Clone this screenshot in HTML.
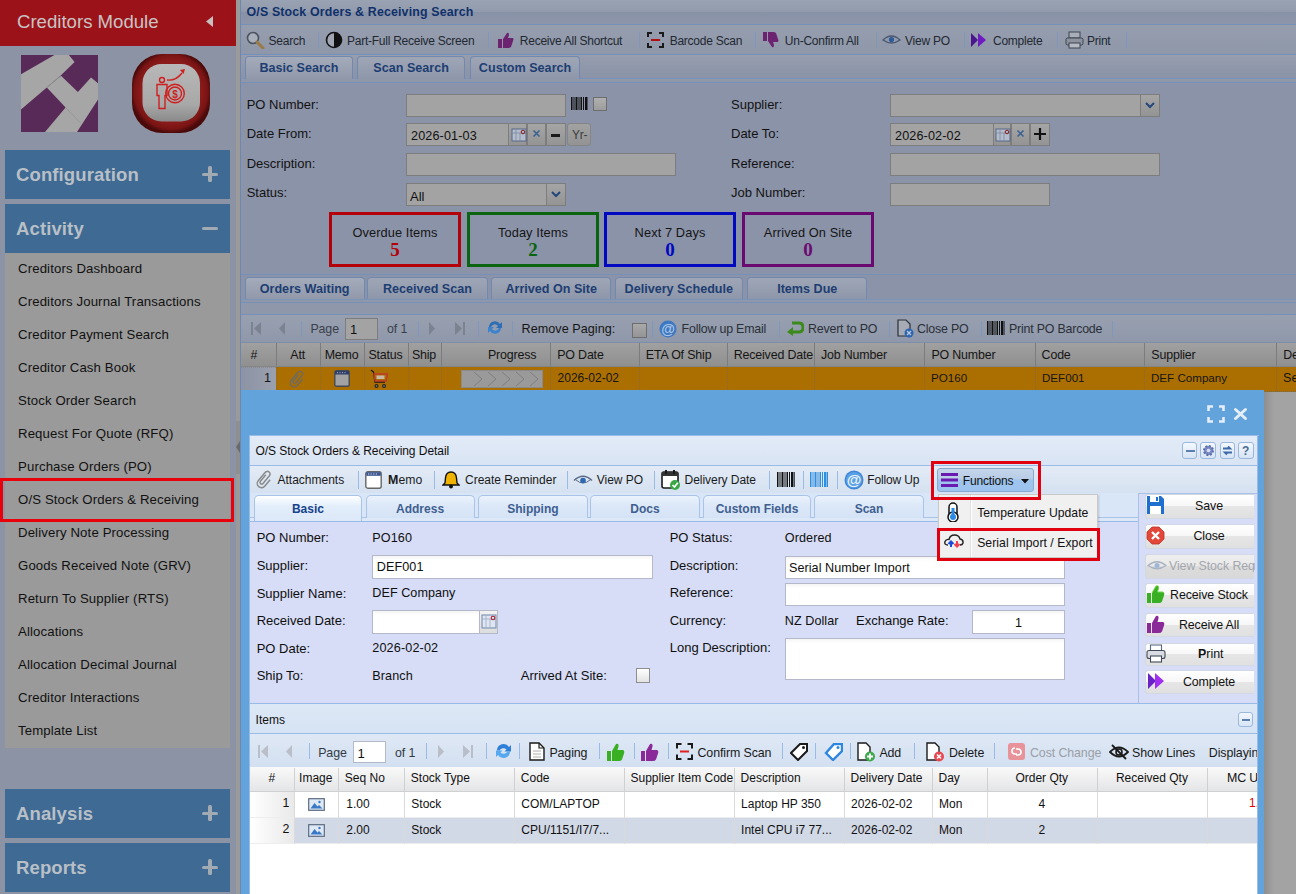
<!DOCTYPE html><html><head><meta charset="utf-8"><style>
html,body{margin:0;padding:0;width:1296px;height:894px;overflow:hidden;background:#8b93a8;font-family:"Liberation Sans",sans-serif;}
.r{position:absolute;box-sizing:border-box;}
.t{position:absolute;line-height:1;white-space:nowrap;}
</style></head><body>
<div class="r" style="left:0px;top:0px;width:236px;height:894px;background:#8b93a5"></div>
<div class="r" style="left:236px;top:0px;width:4px;height:894px;background:#9a9a9a"></div>
<div class="r" style="left:236px;top:421px;width:4px;height:53px;background:#8f8f8f"></div>
<svg class="r" style="left:236px;top:441px;" width="4" height="12" viewBox="0 0 4 12"><path d="M4 0 L0 6 L4 12Z" fill="#6a6a6a"/></svg>
<div class="r" style="left:0px;top:0px;width:236px;height:46px;background:#9c1219"></div>
<div class="t" style="left:17px;top:13.26px;font-size:18.6px;color:#c9c3c3;">Creditors Module</div>
<svg class="r" style="left:204px;top:15px;" width="10" height="13" viewBox="0 0 10 13"><path d="M9 1 L2 6.5 L9 12Z" fill="#c8c0c0"/></svg>
<svg class="r" style="left:21px;top:55px;" width="77" height="77" viewBox="0 0 77 77"><rect width="77" height="77" fill="#582a58"/>
      <path d="M0 19.3 L33.4 0 L47.9 0 L53.6 7 L40 20.2 L25.8 32.4 L0 54.5Z" fill="#a6a6a6"/>
      <path d="M25.8 32.4 L40 20.7 L56.9 37.1 L70 22.6 L77 28.2 L77 44.6 L56 77 L24 77 L44.6 52.6Z" fill="#a6a6a6"/>
      <path d="M25.8 32.4 L40 20.7" stroke="#8a8a8a" stroke-width="1"/>
      <path d="M44.6 52.6 L59.7 68.1" stroke="#909090" stroke-width="0.8"/></svg>
<svg class="r" style="left:131px;top:53px;" width="80" height="81" viewBox="0 0 80 81"><defs><radialGradient id="rg" cx="50%" cy="48%" r="52%"><stop offset="0.55" stop-color="#6a1010"/><stop offset="0.72" stop-color="#8e1c1c"/><stop offset="0.9" stop-color="#7a1414"/><stop offset="1" stop-color="#4a0a0a"/></radialGradient>
      <linearGradient id="ig" x1="0" y1="0" x2="0" y2="1"><stop offset="0" stop-color="#b8b8b8"/><stop offset="0.7" stop-color="#a8a8a8"/><stop offset="1" stop-color="#8a8a8a"/></linearGradient></defs>
      <rect x="1" y="1" width="78" height="79" rx="30" fill="url(#rg)"/>
      <rect x="11.5" y="11" width="57.5" height="57.5" rx="19" fill="url(#ig)"/>
      <g fill="none" stroke="#d01e1e" stroke-width="1.4">
       <circle cx="31" cy="27" r="2.5"/>
       <path d="M26 31.5 h10 v11 h-2 v13 h-6 v-13 h-2z"/>
       <circle cx="44" cy="40.5" r="9.3"/><circle cx="44" cy="40.5" r="6.5"/>
       <path d="M36 27 q9 1 15 -7"/>
      </g>
      <path d="M49 17 l5 -1 l-1.5 5z" fill="#d01e1e"/>
      <text x="44" y="44.5" font-size="10" font-family="Liberation Sans" fill="#d01e1e" text-anchor="middle" font-weight="bold">$</text></svg>
<div class="r" style="left:5px;top:150px;width:225px;height:49px;background:#3e6a93"></div>
<div class="t" style="left:16px;top:165.84px;font-size:18.5px;font-weight:bold;color:#b9bfc6;letter-spacing:0.12px;">Configuration</div>
<div class="r" style="left:202px;top:172.5px;width:16px;height:3.5px;background:#a2aab3;border-radius:1.5px"></div>
<div class="r" style="left:208.3px;top:166px;width:3.5px;height:16px;background:#a2aab3;border-radius:1.5px"></div>
<div class="r" style="left:5px;top:204px;width:225px;height:49px;background:#3e6a93"></div>
<div class="t" style="left:16px;top:219.84px;font-size:18.5px;font-weight:bold;color:#b9bfc6;letter-spacing:0.12px;">Activity</div>
<div class="r" style="left:202px;top:226.5px;width:16px;height:3.5px;background:#a2aab3;border-radius:1.5px"></div>
<div class="r" style="left:5px;top:253px;width:225px;height:495px;background:#9a9a9a"></div>
<div class="t" style="left:18px;top:261.73px;font-size:13.2px;color:#111111;letter-spacing:0.13px;">Creditors Dashboard</div>
<div class="t" style="left:18px;top:294.73px;font-size:13.2px;color:#111111;letter-spacing:0.13px;">Creditors Journal Transactions</div>
<div class="t" style="left:18px;top:327.73px;font-size:13.2px;color:#111111;letter-spacing:0.13px;">Creditor Payment Search</div>
<div class="t" style="left:18px;top:360.73px;font-size:13.2px;color:#111111;letter-spacing:0.13px;">Creditor Cash Book</div>
<div class="t" style="left:18px;top:393.73px;font-size:13.2px;color:#111111;letter-spacing:0.13px;">Stock Order Search</div>
<div class="t" style="left:18px;top:426.73px;font-size:13.2px;color:#111111;letter-spacing:0.13px;">Request For Quote (RFQ)</div>
<div class="t" style="left:18px;top:459.73px;font-size:13.2px;color:#111111;letter-spacing:0.13px;">Purchase Orders (PO)</div>
<div class="t" style="left:18px;top:492.73px;font-size:13.2px;color:#111111;letter-spacing:0.13px;">O/S Stock Orders &amp; Receiving</div>
<div class="t" style="left:18px;top:525.73px;font-size:13.2px;color:#111111;letter-spacing:0.13px;">Delivery Note Processing</div>
<div class="t" style="left:18px;top:558.73px;font-size:13.2px;color:#111111;letter-spacing:0.13px;">Goods Received Note (GRV)</div>
<div class="t" style="left:18px;top:591.73px;font-size:13.2px;color:#111111;letter-spacing:0.13px;">Return To Supplier (RTS)</div>
<div class="t" style="left:18px;top:624.73px;font-size:13.2px;color:#111111;letter-spacing:0.13px;">Allocations</div>
<div class="t" style="left:18px;top:657.73px;font-size:13.2px;color:#111111;letter-spacing:0.13px;">Allocation Decimal Journal</div>
<div class="t" style="left:18px;top:690.73px;font-size:13.2px;color:#111111;letter-spacing:0.13px;">Creditor Interactions</div>
<div class="t" style="left:18px;top:723.73px;font-size:13.2px;color:#111111;letter-spacing:0.13px;">Template List</div>
<div class="r" style="left:0px;top:478px;width:234px;height:44px;border:3px solid #e8000a;box-sizing:border-box"></div>
<div class="r" style="left:5px;top:789px;width:225px;height:49px;background:#3e6a93"></div>
<div class="t" style="left:16px;top:804.84px;font-size:18.5px;font-weight:bold;color:#b9bfc6;letter-spacing:0.12px;">Analysis</div>
<div class="r" style="left:202px;top:811.5px;width:16px;height:3.5px;background:#a2aab3;border-radius:1.5px"></div>
<div class="r" style="left:208.3px;top:805px;width:3.5px;height:16px;background:#a2aab3;border-radius:1.5px"></div>
<div class="r" style="left:5px;top:843px;width:225px;height:49px;background:#3e6a93"></div>
<div class="t" style="left:16px;top:858.84px;font-size:18.5px;font-weight:bold;color:#b9bfc6;letter-spacing:0.12px;">Reports</div>
<div class="r" style="left:202px;top:865.5px;width:16px;height:3.5px;background:#a2aab3;border-radius:1.5px"></div>
<div class="r" style="left:208.3px;top:859px;width:3.5px;height:16px;background:#a2aab3;border-radius:1.5px"></div>
<div class="r" style="left:240px;top:0px;width:1056px;height:894px;background:#8b93a8"></div>
<div class="r" style="left:240px;top:0px;width:1px;height:894px;background:#6f86ae"></div>
<div class="r" style="left:241px;top:0px;width:1055px;height:24px;background:linear-gradient(#99a2b2 0%,#929bad 50%,#8892a7 52%,#8c95a9 100%)"></div>
<div class="r" style="left:241px;top:24px;width:1055px;height:1px;background:#7690b8"></div>
<div class="t" style="left:246.5px;top:5.90px;font-size:12.4px;font-weight:bold;color:#10306a;letter-spacing:0.15px;">O/S Stock Orders &amp; Receiving Search</div>
<div class="r" style="left:241px;top:25px;width:1055px;height:29px;background:linear-gradient(#969eae,#8e97a9)"></div>
<div class="r" style="left:241px;top:54px;width:1055px;height:1px;background:#7690b8"></div>
<div class="t" style="left:268.6px;top:34.54px;font-size:12px;color:#222831;letter-spacing:-0.25px;">Search</div>
<div class="r" style="left:317.5px;top:32px;width:1px;height:16px;background:#7f97bd"></div>
<div class="t" style="left:347px;top:34.54px;font-size:12px;color:#222831;letter-spacing:-0.25px;">Part-Full Receive Screen</div>
<div class="r" style="left:488.3px;top:32px;width:1px;height:16px;background:#7f97bd"></div>
<div class="t" style="left:519.8px;top:34.54px;font-size:12px;color:#222831;letter-spacing:-0.25px;">Receive All Shortcut</div>
<div class="r" style="left:638.7px;top:32px;width:1px;height:16px;background:#7f97bd"></div>
<div class="t" style="left:669.7px;top:34.54px;font-size:12px;color:#222831;letter-spacing:-0.25px;">Barcode Scan</div>
<div class="r" style="left:754.7px;top:32px;width:1px;height:16px;background:#7f97bd"></div>
<div class="t" style="left:784.8px;top:34.54px;font-size:12px;color:#222831;letter-spacing:-0.25px;">Un-Confirm All</div>
<div class="r" style="left:875.7px;top:32px;width:1px;height:16px;background:#7f97bd"></div>
<div class="t" style="left:905px;top:34.54px;font-size:12px;color:#222831;letter-spacing:-0.25px;">View PO</div>
<div class="r" style="left:964px;top:32px;width:1px;height:16px;background:#7f97bd"></div>
<div class="t" style="left:993px;top:34.54px;font-size:12px;color:#222831;letter-spacing:-0.25px;">Complete</div>
<div class="r" style="left:1057px;top:32px;width:1px;height:16px;background:#7f97bd"></div>
<div class="t" style="left:1087px;top:34.54px;font-size:12px;color:#222831;letter-spacing:-0.25px;">Print</div>
<div class="r" style="left:1126px;top:32px;width:1px;height:16px;background:#7f97bd"></div>
<svg class="r" style="left:246px;top:31px;" width="19" height="18" viewBox="0 0 19 18"><circle cx="7" cy="7" r="5.5" fill="#a9b0bb" stroke="#4b5360" stroke-width="1.6"/><path d="M11 11 L17 17" stroke="#9c7a45" stroke-width="3" stroke-linecap="round"/></svg>
<svg class="r" style="left:325px;top:31px;" width="18" height="18" viewBox="0 0 18 18"><circle cx="9" cy="9" r="7.5" fill="#a0a6b2" stroke="#111" stroke-width="1.6"/><path d="M9 1.5 A7.5 7.5 0 0 1 9 16.5Z" fill="#111"/></svg>
<svg class="r" style="left:497px;top:31px;" width="18" height="18" viewBox="0 0 18 18"><path d="M1 8 h4 v9 h-4z M6 8 L10 2 Q12 1 12 4 L11 7 h5 Q17 8 16 10 L14 16 Q13 17 11 17 H6z" fill="#6d2470"/></svg>
<svg class="r" style="left:647px;top:32px;" width="17" height="16" viewBox="0 0 17 16"><path d="M1 5 V1 H5 M12 1 H16 V5 M16 11 V15 H12 M5 15 H1 V11" fill="none" stroke="#1a1a1a" stroke-width="2"/><rect x="4" y="7" width="9" height="2" fill="#b01010"/></svg>
<svg class="r" style="left:762px;top:31px;" width="18" height="18" viewBox="0 0 18 18"><path d="M1 1 h4 v9 h-4z M6 1 H11 Q13 1 14 2 L16 8 Q17 10 16 11 H11 L12 14 Q12 17 10 16 L6 10z" fill="#6d2470"/></svg>
<svg class="r" style="left:882px;top:34px;" width="19" height="11" viewBox="0 0 19 11"><path d="M1 6 Q9.5 -2 18 6 Q9.5 12 1 6Z" fill="none" stroke="#4b5870" stroke-width="1.4"/><circle cx="9.5" cy="5.5" r="2.6" fill="#2c5a9a"/></svg>
<svg class="r" style="left:970px;top:32px;" width="17" height="16" viewBox="0 0 17 16"><path d="M1 1 L8 8 L1 15Z" fill="#4a1690"/><path d="M8 1 L16 8 L8 15Z" fill="#6e1cc0"/></svg>
<svg class="r" style="left:1065px;top:31px;" width="19" height="18" viewBox="0 0 19 18"><rect x="4" y="1" width="11" height="6" fill="#a8aeb8" stroke="#3c4450" stroke-width="1"/><rect x="1" y="7" width="17" height="7" rx="1.5" fill="#8d939e" stroke="#3c4450" stroke-width="1"/><rect x="4" y="12" width="11" height="5" fill="#b5bac3" stroke="#3c4450" stroke-width="1"/></svg>
<div class="r" style="left:241px;top:55px;width:1055px;height:23px;background:linear-gradient(#959dae,#8a93a7)"></div>
<div class="r" style="left:241px;top:78px;width:1055px;height:5px;background:#8f98ab;border-top:1px solid #7b93b9;border-bottom:1px solid #7690b8"></div>
<div class="r" style="left:244.6px;top:56px;width:108.70000000000002px;height:23px;background:linear-gradient(#a4acbb,#9098aa);border:1px solid #7189b0;border-bottom:none;border-radius:4px 4px 0 0"></div>
<div class="t" style="left:244.6px;top:61.83px;font-size:12.6px;font-weight:bold;color:#1d3d72;width:108.70000000000002px;text-align:center;">Basic Search</div>
<div class="r" style="left:357px;top:56px;width:108.19999999999999px;height:23px;background:linear-gradient(#9ea6b6,#8e97aa);border:1px solid #7189b0;border-bottom:none;border-radius:4px 4px 0 0"></div>
<div class="t" style="left:357px;top:61.83px;font-size:12.6px;font-weight:bold;color:#1d3d72;width:108.19999999999999px;text-align:center;">Scan Search</div>
<div class="r" style="left:469.6px;top:56px;width:110.89999999999998px;height:23px;background:linear-gradient(#9ea6b6,#8e97aa);border:1px solid #7189b0;border-bottom:none;border-radius:4px 4px 0 0"></div>
<div class="t" style="left:469.6px;top:61.83px;font-size:12.6px;font-weight:bold;color:#1d3d72;width:110.89999999999998px;text-align:center;">Custom Search</div>
<div class="t" style="left:246.7px;top:97.90px;font-size:13px;color:#121212;">PO Number:</div>
<div class="t" style="left:246.7px;top:126.80px;font-size:13px;color:#121212;">Date From:</div>
<div class="t" style="left:246.7px;top:156.60px;font-size:13px;color:#121212;">Description:</div>
<div class="t" style="left:246.7px;top:186.20px;font-size:13px;color:#121212;">Status:</div>
<div class="t" style="left:731px;top:97.90px;font-size:13px;color:#121212;">Supplier:</div>
<div class="t" style="left:731px;top:126.80px;font-size:13px;color:#121212;">Date To:</div>
<div class="t" style="left:731px;top:156.60px;font-size:13px;color:#121212;">Reference:</div>
<div class="t" style="left:731px;top:186.20px;font-size:13px;color:#121212;">Job Number:</div>
<div class="r" style="left:406px;top:94px;width:160px;height:23px;background:#a3a3a3;border:1px solid #7d7d7d"></div>
<svg class="r" style="left:571px;top:97px;" width="17" height="13" viewBox="0 0 17 13"><rect x="0" y="0" width="1.5" height="13" fill="#111"/><rect x="2.5" y="0" width="1" height="13" fill="#111"/><rect x="4.5" y="0" width="2" height="13" fill="#111"/><rect x="7.5" y="0" width="1" height="13" fill="#111"/><rect x="9.5" y="0" width="1.5" height="13" fill="#111"/><rect x="12" y="0" width="1" height="13" fill="#111"/><rect x="14" y="0" width="2" height="13" fill="#111"/><rect x="16.5" y="0" width="0.8" height="13" fill="#111"/></svg>
<div class="r" style="left:593px;top:97px;width:14px;height:14px;background:linear-gradient(#b0b0b0,#9c9c9c);border:1px solid #6e6e6e"></div>
<div class="r" style="left:406px;top:123px;width:103px;height:23px;background:#a3a3a3;border:1px solid #7d7d7d"></div>
<div class="t" style="left:411px;top:129.83px;font-size:12.6px;color:#111;letter-spacing:0.15px;">2026-01-03</div>
<div class="r" style="left:508px;top:123px;width:19px;height:23px;background:linear-gradient(#a5a5a5,#949494);border:1px solid #7d7d7d"></div>
<div class="r" style="left:527px;top:123px;width:19px;height:23px;background:linear-gradient(#a5a5a5,#949494);border:1px solid #7d7d7d"></div>
<div class="r" style="left:546px;top:123px;width:20px;height:23px;background:linear-gradient(#a5a5a5,#949494);border:1px solid #7d7d7d"></div>
<svg class="r" style="left:511px;top:128px;" width="16" height="14" viewBox="0 0 16 14"><rect x="1" y="1" width="14" height="12" fill="#b5bccb" stroke="#54698a"/><path d="M1 5h14M5 1v12M9 5v8" stroke="#7c8aa4" stroke-width="0.8"/><circle cx="12" cy="4" r="1.8" fill="none" stroke="#8a1a1a" stroke-width="1"/></svg>
<svg class="r" style="left:532px;top:129px;" width="9" height="9" viewBox="0 0 9 9"><path d="M1.5 1.5 L7.5 7.5 M7.5 1.5 L1.5 7.5" stroke="#3a6290" stroke-width="1.6"/></svg>
<div class="r" style="left:551px;top:134px;width:9px;height:3px;background:#1a1a1a"></div>
<div class="r" style="left:567px;top:123px;width:24px;height:23px;background:linear-gradient(#a2a2a2,#939393);border:1px solid #858585;border-radius:3px"></div>
<div class="t" style="left:572px;top:129.34px;font-size:12px;color:#3c3c3c;letter-spacing:-0.3px;">Yr-</div>
<div class="r" style="left:406px;top:153px;width:270px;height:23px;background:#a3a3a3;border:1px solid #7d7d7d"></div>
<div class="r" style="left:406px;top:183px;width:160px;height:23px;background:#a3a3a3;border:1px solid #7d7d7d"></div>
<div class="t" style="left:410px;top:189.50px;font-size:13px;color:#111;">All</div>
<div class="r" style="left:546px;top:183px;width:20px;height:23px;background:linear-gradient(#a5a5a5,#949494);border:1px solid #7d7d7d"></div>
<svg class="r" style="left:550px;top:189px;" width="12" height="10" viewBox="0 0 12 10"><path d="M2 3 L6 7 L10 3" fill="none" stroke="#24467c" stroke-width="2"/></svg>
<div class="r" style="left:890px;top:94px;width:270px;height:23px;background:#a3a3a3;border:1px solid #7d7d7d"></div>
<div class="r" style="left:1140px;top:94px;width:20px;height:23px;background:linear-gradient(#a5a5a5,#949494);border:1px solid #7d7d7d"></div>
<svg class="r" style="left:1144px;top:100px;" width="12" height="10" viewBox="0 0 12 10"><path d="M2 3 L6 7 L10 3" fill="none" stroke="#24467c" stroke-width="2"/></svg>
<div class="r" style="left:890px;top:123px;width:104px;height:23px;background:#a3a3a3;border:1px solid #7d7d7d"></div>
<div class="t" style="left:895px;top:129.83px;font-size:12.6px;color:#111;letter-spacing:0.15px;">2026-02-02</div>
<div class="r" style="left:993px;top:123px;width:18px;height:23px;background:linear-gradient(#a5a5a5,#949494);border:1px solid #7d7d7d"></div>
<div class="r" style="left:1011px;top:123px;width:19px;height:23px;background:linear-gradient(#a5a5a5,#949494);border:1px solid #7d7d7d"></div>
<div class="r" style="left:1030px;top:123px;width:20px;height:23px;background:linear-gradient(#a5a5a5,#949494);border:1px solid #7d7d7d"></div>
<svg class="r" style="left:995px;top:128px;" width="16" height="14" viewBox="0 0 16 14"><rect x="1" y="1" width="14" height="12" fill="#b5bccb" stroke="#54698a"/><path d="M1 5h14M5 1v12M9 5v8" stroke="#7c8aa4" stroke-width="0.8"/><circle cx="12" cy="4" r="1.8" fill="none" stroke="#8a1a1a" stroke-width="1"/></svg>
<svg class="r" style="left:1016px;top:129px;" width="9" height="9" viewBox="0 0 9 9"><path d="M1.5 1.5 L7.5 7.5 M7.5 1.5 L1.5 7.5" stroke="#3a6290" stroke-width="1.6"/></svg>
<svg class="r" style="left:1033px;top:127px;" width="14" height="14" viewBox="0 0 14 14"><path d="M7 1 V13 M1 7 H13" stroke="#111" stroke-width="2.2"/></svg>
<div class="r" style="left:890px;top:153px;width:270px;height:23px;background:#a3a3a3;border:1px solid #7d7d7d"></div>
<div class="r" style="left:890px;top:183px;width:160px;height:23px;background:#a3a3a3;border:1px solid #7d7d7d"></div>
<div class="r" style="left:329px;top:212px;width:132px;height:55px;border:3px solid #b40008"></div>
<div class="t" style="left:329px;top:226.96px;font-size:12.8px;color:#151515;letter-spacing:0.1px;width:132px;text-align:center;">Overdue Items</div>
<div class="t" style="left:329px;top:239.92px;font-size:19px;font-weight:bold;color:#b40008;font-family:'Liberation Serif',serif;width:132px;text-align:center;">5</div>
<div class="r" style="left:467px;top:212px;width:132px;height:55px;border:3px solid #0a6410"></div>
<div class="t" style="left:467px;top:226.96px;font-size:12.8px;color:#151515;letter-spacing:0.1px;width:132px;text-align:center;">Today Items</div>
<div class="t" style="left:467px;top:239.92px;font-size:19px;font-weight:bold;color:#0a6410;font-family:'Liberation Serif',serif;width:132px;text-align:center;">2</div>
<div class="r" style="left:604px;top:212px;width:132px;height:55px;border:3px solid #0008c0"></div>
<div class="t" style="left:604px;top:226.96px;font-size:12.8px;color:#151515;letter-spacing:0.1px;width:132px;text-align:center;">Next 7 Days</div>
<div class="t" style="left:604px;top:239.92px;font-size:19px;font-weight:bold;color:#0008c0;font-family:'Liberation Serif',serif;width:132px;text-align:center;">0</div>
<div class="r" style="left:742px;top:212px;width:132px;height:55px;border:3px solid #6a0a70"></div>
<div class="t" style="left:742px;top:226.96px;font-size:12.8px;color:#151515;letter-spacing:0.1px;width:132px;text-align:center;">Arrived On Site</div>
<div class="t" style="left:742px;top:239.92px;font-size:19px;font-weight:bold;color:#6a0a70;font-family:'Liberation Serif',serif;width:132px;text-align:center;">0</div>
<div class="r" style="left:241px;top:274px;width:1055px;height:1px;background:#7690b8"></div>
<div class="r" style="left:241px;top:299px;width:1055px;height:4px;background:#8f98ab;border-top:1px solid #7b93b9;border-bottom:1px solid #7690b8"></div>
<div class="r" style="left:244.6px;top:277px;width:120.1px;height:22px;background:linear-gradient(#a4acbb,#9098aa);border:1px solid #7189b0;border-bottom:none;border-radius:4px 4px 0 0"></div>
<div class="t" style="left:244.6px;top:282.83px;font-size:12.6px;font-weight:bold;color:#1d3d72;width:120.1px;text-align:center;">Orders Waiting</div>
<div class="r" style="left:367.4px;top:277px;width:120.20000000000005px;height:22px;background:linear-gradient(#9ea6b6,#8e97aa);border:1px solid #7189b0;border-bottom:none;border-radius:4px 4px 0 0"></div>
<div class="t" style="left:367.4px;top:282.83px;font-size:12.6px;font-weight:bold;color:#1d3d72;width:120.20000000000005px;text-align:center;">Received Scan</div>
<div class="r" style="left:491.3px;top:277px;width:119.90000000000003px;height:22px;background:linear-gradient(#9ea6b6,#8e97aa);border:1px solid #7189b0;border-bottom:none;border-radius:4px 4px 0 0"></div>
<div class="t" style="left:491.3px;top:282.83px;font-size:12.6px;font-weight:bold;color:#1d3d72;width:119.90000000000003px;text-align:center;">Arrived On Site</div>
<div class="r" style="left:614.5px;top:277px;width:128.60000000000002px;height:22px;background:linear-gradient(#9ea6b6,#8e97aa);border:1px solid #7189b0;border-bottom:none;border-radius:4px 4px 0 0"></div>
<div class="t" style="left:614.5px;top:282.83px;font-size:12.6px;font-weight:bold;color:#1d3d72;width:128.60000000000002px;text-align:center;">Delivery Schedule</div>
<div class="r" style="left:747.3px;top:277px;width:119.90000000000009px;height:22px;background:linear-gradient(#9ea6b6,#8e97aa);border:1px solid #7189b0;border-bottom:none;border-radius:4px 4px 0 0"></div>
<div class="t" style="left:747.3px;top:282.83px;font-size:12.6px;font-weight:bold;color:#1d3d72;width:119.90000000000009px;text-align:center;">Items Due</div>
<div class="r" style="left:241px;top:303px;width:1055px;height:11px;background:#8f97aa"></div>
<div class="r" style="left:241px;top:314px;width:1055px;height:1px;background:#7690b8"></div>
<div class="r" style="left:241px;top:315px;width:1055px;height:27px;background:linear-gradient(#98a0b0,#8f98aa)"></div>
<svg class="r" style="left:251px;top:322px;" width="11" height="13" viewBox="0 0 11 13"><rect x="0" y="0" width="2" height="13" fill="#7c8390"/><path d="M10 0 L3 6.5 L10 13Z" fill="#7c8390"/></svg>
<svg class="r" style="left:278px;top:322px;" width="8" height="13" viewBox="0 0 8 13"><path d="M7 0 L1 6.5 L7 13Z" fill="#7c8390"/></svg>
<div class="r" style="left:301px;top:321px;width:1px;height:16px;background:#7f97bd"></div>
<div class="t" style="left:310.4px;top:322.70px;font-size:12.4px;color:#3a404b;letter-spacing:-0.1px;">Page</div>
<div class="r" style="left:345px;top:318px;width:33px;height:22px;background:#a3a3a3;border:1px solid #7d7d7d"></div>
<div class="t" style="left:350px;top:323.00px;font-size:13px;color:#111;">1</div>
<div class="t" style="left:387px;top:322.70px;font-size:12.4px;color:#3a404b;letter-spacing:-0.1px;">of 1</div>
<div class="r" style="left:418px;top:321px;width:1px;height:16px;background:#7f97bd"></div>
<svg class="r" style="left:428px;top:322px;" width="8" height="13" viewBox="0 0 8 13"><path d="M1 0 L7 6.5 L1 13Z" fill="#7c8390"/></svg>
<svg class="r" style="left:454px;top:322px;" width="11" height="13" viewBox="0 0 11 13"><path d="M1 0 L8 6.5 L1 13Z" fill="#7c8390"/><rect x="9" y="0" width="2" height="13" fill="#7c8390"/></svg>
<div class="r" style="left:478px;top:321px;width:1px;height:16px;background:#7f97bd"></div>
<svg class="r" style="left:486px;top:319px;" width="18" height="17" viewBox="0 0 18 17"><path d="M3 8 A6 6 0 0 1 14 5 L16 3 L16 9 L10 9 L12 7 A4 4 0 0 0 5 8Z" fill="#2f6db5"/><path d="M15 9 A6 6 0 0 1 4 12 L2 14 L2 8 L8 8 L6 10 A4 4 0 0 0 13 9Z" fill="#3d82cc"/></svg>
<div class="r" style="left:511.8px;top:321px;width:1px;height:16px;background:#7f97bd"></div>
<div class="t" style="left:521.5px;top:322.93px;font-size:12.6px;color:#151515;letter-spacing:0.05px;">Remove Paging:</div>
<div class="r" style="left:632px;top:323px;width:15px;height:15px;background:linear-gradient(#a8a8a8,#959595);border:1px solid #6e6e6e"></div>
<div class="r" style="left:651.7px;top:321px;width:1px;height:16px;background:#7f97bd"></div>
<svg class="r" style="left:659px;top:320px;" width="18" height="18" viewBox="0 0 18 18"><circle cx="9" cy="9" r="8.5" fill="#3d78c0"/><text x="9" y="13.5" font-size="14" font-family="Liberation Sans" font-weight="bold" fill="#a9c4e6" text-anchor="middle">@</text></svg>
<div class="t" style="left:681.6px;top:323.10px;font-size:12.4px;color:#2a2f38;letter-spacing:-0.2px;">Follow up Email</div>
<div class="r" style="left:778.8px;top:321px;width:1px;height:16px;background:#7f97bd"></div>
<svg class="r" style="left:786px;top:320px;" width="18" height="16" viewBox="0 0 18 16"><path d="M6 3 H13 Q17 3 17 7.5 Q17 12 13 12 H6" fill="none" stroke="#3d8a1c" stroke-width="3"/><path d="M1 12 L7 7 L7 16Z" fill="#3d8a1c"/></svg>
<div class="t" style="left:808px;top:323.10px;font-size:12.4px;color:#2a2f38;letter-spacing:-0.2px;">Revert to PO</div>
<div class="r" style="left:889px;top:321px;width:1px;height:16px;background:#7f97bd"></div>
<svg class="r" style="left:897px;top:319px;" width="17" height="19" viewBox="0 0 17 19"><path d="M1 1 H9 L13 5 V17 H1Z" fill="#a6abb5" stroke="#2c3038" stroke-width="1.2"/><circle cx="12" cy="14" r="4.5" fill="#2c64b0"/><path d="M10 12 L14 16 M14 12 L10 16" stroke="#c0cde0" stroke-width="1.2"/></svg>
<div class="t" style="left:917px;top:323.10px;font-size:12.4px;color:#2a2f38;letter-spacing:-0.2px;">Close PO</div>
<div class="r" style="left:981px;top:321px;width:1px;height:16px;background:#7f97bd"></div>
<svg class="r" style="left:987px;top:321px;" width="18" height="14" viewBox="0 0 18 14"><rect x="0" y="0" width="1.5" height="14" fill="#111"/><rect x="2.5" y="0" width="1" height="14" fill="#111"/><rect x="4.5" y="0" width="2" height="14" fill="#111"/><rect x="7.5" y="0" width="1" height="14" fill="#111"/><rect x="9.5" y="0" width="1.5" height="14" fill="#111"/><rect x="12" y="0" width="1" height="14" fill="#111"/><rect x="14" y="0" width="2" height="14" fill="#111"/><rect x="16.5" y="0" width="1" height="14" fill="#111"/></svg>
<div class="t" style="left:1009px;top:323.10px;font-size:12.4px;color:#2a2f38;letter-spacing:-0.2px;">Print PO Barcode</div>
<div class="r" style="left:1112px;top:321px;width:1px;height:16px;background:#7f97bd"></div>
<div class="r" style="left:241px;top:342px;width:1055px;height:25px;background:linear-gradient(#a1a1a1,#8f8f8f)"></div>
<div class="r" style="left:241px;top:342px;width:1055px;height:1px;background:#7f8da6"></div>
<div class="r" style="left:241px;top:366px;width:1055px;height:1px;background:#858585"></div>
<div class="r" style="left:275.5px;top:343px;width:1px;height:23px;background:#7c7c7c"></div>
<div class="r" style="left:319.75px;top:343px;width:1px;height:23px;background:#7c7c7c"></div>
<div class="r" style="left:363.5px;top:343px;width:1px;height:23px;background:#7c7c7c"></div>
<div class="r" style="left:407.5px;top:343px;width:1px;height:23px;background:#7c7c7c"></div>
<div class="r" style="left:440.5px;top:343px;width:1px;height:23px;background:#7c7c7c"></div>
<div class="r" style="left:550.2px;top:343px;width:1px;height:23px;background:#7c7c7c"></div>
<div class="r" style="left:638.8px;top:343px;width:1px;height:23px;background:#7c7c7c"></div>
<div class="r" style="left:726.7px;top:343px;width:1px;height:23px;background:#7c7c7c"></div>
<div class="r" style="left:814px;top:343px;width:1px;height:23px;background:#7c7c7c"></div>
<div class="r" style="left:924.4px;top:343px;width:1px;height:23px;background:#7c7c7c"></div>
<div class="r" style="left:1034.6px;top:343px;width:1px;height:23px;background:#7c7c7c"></div>
<div class="r" style="left:1144.3px;top:343px;width:1px;height:23px;background:#7c7c7c"></div>
<div class="r" style="left:1276.3px;top:343px;width:1px;height:23px;background:#7c7c7c"></div>
<div class="t" style="left:250.5px;top:348.50px;font-size:12.4px;color:#151515;letter-spacing:-0.15px;">#</div>
<div class="t" style="left:275.5px;top:348.50px;font-size:12.4px;color:#151515;letter-spacing:-0.15px;width:44.25px;text-align:center;">Att</div>
<div class="t" style="left:319.75px;top:348.50px;font-size:12.4px;color:#151515;letter-spacing:-0.15px;width:43.75px;text-align:center;">Memo</div>
<div class="t" style="left:363.5px;top:348.50px;font-size:12.4px;color:#151515;letter-spacing:-0.15px;width:44.0px;text-align:center;">Status</div>
<div class="t" style="left:407.5px;top:348.50px;font-size:12.4px;color:#151515;letter-spacing:-0.15px;width:33.0px;text-align:center;">Ship</div>
<div class="t" style="left:488px;top:348.50px;font-size:12.4px;color:#151515;letter-spacing:-0.15px;">Progress</div>
<div class="t" style="left:557.2px;top:348.50px;font-size:12.4px;color:#151515;letter-spacing:-0.15px;">PO Date</div>
<div class="t" style="left:645.8px;top:348.50px;font-size:12.4px;color:#151515;letter-spacing:-0.15px;">ETA Of Ship</div>
<div class="t" style="left:733.7px;top:348.50px;font-size:12.4px;color:#151515;letter-spacing:-0.15px;">Received Date</div>
<div class="t" style="left:821px;top:348.50px;font-size:12.4px;color:#151515;letter-spacing:-0.15px;">Job Number</div>
<div class="t" style="left:931.4px;top:348.50px;font-size:12.4px;color:#151515;letter-spacing:-0.15px;">PO Number</div>
<div class="t" style="left:1041.6px;top:348.50px;font-size:12.4px;color:#151515;letter-spacing:-0.15px;">Code</div>
<div class="t" style="left:1151.3px;top:348.50px;font-size:12.4px;color:#151515;letter-spacing:-0.15px;">Supplier</div>
<div class="t" style="left:1283.3px;top:348.50px;font-size:12.4px;color:#151515;letter-spacing:-0.15px;">De</div>
<div class="r" style="left:241px;top:367px;width:35px;height:25px;background:linear-gradient(90deg,#8c93a4,#9aa0ad)"></div>
<div class="r" style="left:241px;top:367px;width:1055px;height:1px;border-top:1px dotted #8a8a8a"></div>
<div class="r" style="left:275.5px;top:367px;width:1020.5px;height:25px;background:#aa6f00"></div>
<div class="r" style="left:241px;top:391px;width:1055px;height:1px;border-top:1px dotted #7a6a50"></div>
<div class="r" style="left:275.5px;top:367px;width:1px;height:25px;border-left:1px dotted #8a6a30"></div>
<div class="r" style="left:319.75px;top:367px;width:1px;height:25px;border-left:1px dotted #8a6a30"></div>
<div class="r" style="left:363.5px;top:367px;width:1px;height:25px;border-left:1px dotted #8a6a30"></div>
<div class="r" style="left:407.5px;top:367px;width:1px;height:25px;border-left:1px dotted #8a6a30"></div>
<div class="r" style="left:440.5px;top:367px;width:1px;height:25px;border-left:1px dotted #8a6a30"></div>
<div class="r" style="left:550.2px;top:367px;width:1px;height:25px;border-left:1px dotted #8a6a30"></div>
<div class="r" style="left:638.8px;top:367px;width:1px;height:25px;border-left:1px dotted #8a6a30"></div>
<div class="r" style="left:726.7px;top:367px;width:1px;height:25px;border-left:1px dotted #8a6a30"></div>
<div class="r" style="left:814px;top:367px;width:1px;height:25px;border-left:1px dotted #8a6a30"></div>
<div class="r" style="left:924.4px;top:367px;width:1px;height:25px;border-left:1px dotted #8a6a30"></div>
<div class="r" style="left:1034.6px;top:367px;width:1px;height:25px;border-left:1px dotted #8a6a30"></div>
<div class="r" style="left:1144.3px;top:367px;width:1px;height:25px;border-left:1px dotted #8a6a30"></div>
<div class="r" style="left:1276.3px;top:367px;width:1px;height:25px;border-left:1px dotted #8a6a30"></div>
<div class="t" style="left:241px;top:372.33px;font-size:12.6px;color:#151515;width:30px;text-align:right;">1</div>
<svg class="r" style="left:288px;top:369px;" width="19" height="20" viewBox="0 0 19 20"><g transform="rotate(40 9.5 10)"><path d="M7.5 6 V14 A1.6 1.6 0 0 0 10.7 14 V4.5 A2.6 2.6 0 0 0 5.5 4.5 V15 A4 4 0 0 0 13.5 15 V7" fill="none" stroke="#6a6a6a" stroke-width="1.3"/></g></svg>
<svg class="r" style="left:334px;top:370px;" width="16" height="17" viewBox="0 0 16 17"><rect x="0.8" y="0.8" width="14.4" height="15.4" rx="1.5" fill="#a2a2a2" stroke="#444a55" stroke-width="1.4"/><rect x="1" y="1" width="14" height="3.5" fill="#2d3f6a"/><path d="M3 2.7h1M5.5 2.7h1M8 2.7h1M10.5 2.7h1" stroke="#c8c8c8" stroke-width="0.9"/></svg>
<svg class="r" style="left:370px;top:369px;" width="19" height="20" viewBox="0 0 19 20"><path d="M1 1 L3.5 3 L5 13 H15" fill="none" stroke="#1a1a1a" stroke-width="1.3"/><path d="M4 5 H17.5 L16 12 H5.2Z" fill="none" stroke="#c03a2a" stroke-width="1.4"/><rect x="6.5" y="6.5" width="8" height="3.5" fill="#c8b8a8"/><circle cx="6.5" cy="17" r="2" fill="#222"/><circle cx="6.5" cy="17" r="0.8" fill="#999"/><circle cx="14" cy="17" r="2" fill="#222"/><circle cx="14" cy="17" r="0.8" fill="#999"/></svg>
<div class="r" style="left:461px;top:370px;width:82px;height:18px;background:#9a9a9a;border:1px solid #8a8a8a"></div>
<svg class="r" style="left:462px;top:371px;" width="80" height="16" viewBox="0 0 80 16"><path d="M12 1 L20 8 L12 15" fill="none" stroke="#7f7f7f" stroke-width="1"/><path d="M26 1 L34 8 L26 15" fill="none" stroke="#7f7f7f" stroke-width="1"/><path d="M40 1 L48 8 L40 15" fill="none" stroke="#7f7f7f" stroke-width="1"/><path d="M54 1 L62 8 L54 15" fill="none" stroke="#7f7f7f" stroke-width="1"/><path d="M68 1 L76 8 L68 15" fill="none" stroke="#7f7f7f" stroke-width="1"/></svg>
<div class="t" style="left:557.6px;top:372.04px;font-size:12px;color:#151515;">2026-02-02</div>
<div class="t" style="left:931px;top:372.38px;font-size:11.6px;color:#151515;letter-spacing:0px;">PO160</div>
<div class="t" style="left:1042px;top:372.38px;font-size:11.6px;color:#151515;letter-spacing:0px;">DEF001</div>
<div class="t" style="left:1151px;top:372.38px;font-size:11.6px;color:#151515;letter-spacing:0px;">DEF Company</div>
<div class="t" style="left:1283px;top:371.53px;font-size:12.6px;color:#151515;">Se</div>
<div class="r" style="left:241px;top:392px;width:1055px;height:502px;background:#a3a3a3"></div>
<div class="r" style="left:241px;top:390px;width:1023px;height:504px;background:#62a3dc"></div>
<svg class="r" style="left:1207px;top:405px;" width="19" height="18" viewBox="0 0 19 18"><path d="M1.5 6 V1.5 H6 M12 1.5 H16.5 V6 M16.5 12 V16.5 H12 M6 16.5 H1.5 V12" fill="none" stroke="#e6eef7" stroke-width="2.6"/></svg>
<svg class="r" style="left:1233px;top:407px;" width="15" height="14" viewBox="0 0 15 14"><path d="M2.5 2.5 L12.5 11.5 M12.5 2.5 L2.5 11.5" stroke="#e6eef7" stroke-width="3" stroke-linecap="round"/></svg>
<div class="r" style="left:249px;top:435px;width:1010px;height:459px;background:#dae5f4;border:1px solid #99bbe8"></div>
<div class="r" style="left:250px;top:436px;width:1008px;height:29px;background:linear-gradient(#e2ebf7,#d9e4f4)"></div>
<div class="r" style="left:250px;top:465px;width:1008px;height:1px;background:#99bbe8"></div>
<div class="t" style="left:255.5px;top:444.64px;font-size:12px;color:#0f0f0f;letter-spacing:-0.05px;">O/S Stock Orders &amp; Receiving Detail</div>
<div class="r" style="left:1182.4px;top:442px;width:14.899999999999864px;height:17px;background:linear-gradient(#f4f8fd,#d7e4f5);border:1px solid #9ab7dd;border-radius:3px"></div>
<div class="r" style="left:1200.4px;top:442px;width:16.0px;height:17px;background:linear-gradient(#f4f8fd,#d7e4f5);border:1px solid #9ab7dd;border-radius:3px"></div>
<div class="r" style="left:1219.5px;top:442px;width:15.5px;height:17px;background:linear-gradient(#f4f8fd,#d7e4f5);border:1px solid #9ab7dd;border-radius:3px"></div>
<div class="r" style="left:1238px;top:442px;width:15.5px;height:17px;background:linear-gradient(#f4f8fd,#d7e4f5);border:1px solid #9ab7dd;border-radius:3px"></div>
<div class="r" style="left:1185.5px;top:450px;width:9px;height:2px;background:#5b7fb0"></div>
<svg class="r" style="left:1202px;top:444px;" width="13" height="13" viewBox="0 0 13 13"><circle cx="6.5" cy="6.5" r="4.5" fill="#7c8cc4" stroke="#5a6aa8" stroke-width="2" stroke-dasharray="2 1.5"/><circle cx="6.5" cy="6.5" r="1.8" fill="#d8e2f2"/></svg>
<svg class="r" style="left:1221px;top:444px;" width="13" height="13" viewBox="0 0 13 13"><path d="M2 4.5 H9 L7 2.5 M11 8.5 H4 L6 10.5" fill="none" stroke="#3d6aa8" stroke-width="2"/></svg>
<div class="t" style="left:1238px;top:444.84px;font-size:12px;font-weight:bold;color:#4a6a96;width:15.5px;text-align:center;">?</div>
<div class="r" style="left:250px;top:466px;width:1008px;height:27px;background:linear-gradient(#e3ebf5,#d5e1f1)"></div>
<svg class="r" style="left:255px;top:469px;" width="19" height="21" viewBox="0 0 19 21"><g transform="rotate(40 9.5 10.5)"><path d="M7.5 6 V14.5 A1.7 1.7 0 0 0 10.9 14.5 V4.5 A2.7 2.7 0 0 0 5.5 4.5 V15.5 A4.2 4.2 0 0 0 13.9 15.5 V7" fill="none" stroke="#8a8a8a" stroke-width="1.5"/></g></svg>
<div class="t" style="left:277.5px;top:474.14px;font-size:12px;color:#1a1a1a;letter-spacing:0px;">Attachments</div>
<div class="r" style="left:358px;top:471px;width:1px;height:18px;background:#99bbe8"></div>
<svg class="r" style="left:365px;top:471px;" width="17" height="18" viewBox="0 0 17 18"><rect x="0.8" y="0.8" width="15.4" height="16.4" rx="2" fill="#fff" stroke="#666" stroke-width="1.4"/><rect x="1.2" y="1.2" width="14.6" height="3.6" fill="#3a5590"/><path d="M3 3h1.2M5.6 3h1.2M8.2 3h1.2M10.8 3h1.2" stroke="#dfe6f2" stroke-width="1"/></svg>
<div class="t" style="left:388px;top:473.80px;font-size:12.4px;font-weight:bold;color:#1a1a1a;">M</div>
<div class="t" style="left:398.5px;top:473.97px;font-size:12.2px;color:#1a1a1a;">emo</div>
<div class="r" style="left:434px;top:471px;width:1px;height:18px;background:#99bbe8"></div>
<svg class="r" style="left:442px;top:470px;" width="18" height="19" viewBox="0 0 18 19"><path d="M9 2 Q14 2 14.5 8 L15 13 L17 15 H1 L3 13 L3.5 8 Q4 2 9 2Z" fill="#f0b400" stroke="#111" stroke-width="1.4"/><circle cx="9" cy="16.5" r="2" fill="#111"/></svg>
<div class="t" style="left:465px;top:474.14px;font-size:12px;color:#1a1a1a;">Create Reminder</div>
<div class="r" style="left:566.5px;top:471px;width:1px;height:18px;background:#99bbe8"></div>
<svg class="r" style="left:573px;top:474px;" width="20" height="12" viewBox="0 0 20 12"><path d="M1 6.5 Q10 -2 19 6.5" fill="none" stroke="#5b6b85" stroke-width="1.6"/><path d="M3 6 Q10 12 17 6" fill="none" stroke="#5b6b85" stroke-width="1"/><circle cx="10" cy="6.5" r="2.8" fill="#2f68b0"/></svg>
<div class="t" style="left:596.7px;top:474.14px;font-size:12px;color:#1a1a1a;">View PO</div>
<div class="r" style="left:654.4px;top:471px;width:1px;height:18px;background:#99bbe8"></div>
<svg class="r" style="left:661px;top:469px;" width="20" height="21" viewBox="0 0 20 21"><rect x="1" y="3" width="16" height="16" rx="2" fill="#fff" stroke="#1a1a1a" stroke-width="1.6"/><rect x="1" y="3" width="16" height="4" fill="#333"/><rect x="4" y="1" width="2" height="4" fill="#1a1a1a"/><rect x="12" y="1" width="2" height="4" fill="#1a1a1a"/><circle cx="14" cy="16" r="5" fill="#39a845"/><path d="M11.5 16 L13.5 18 L16.8 13.8" fill="none" stroke="#fff" stroke-width="1.6"/></svg>
<div class="t" style="left:684.6px;top:474.14px;font-size:12px;color:#1a1a1a;letter-spacing:-0.05px;">Delivery Date</div>
<div class="r" style="left:768.8px;top:471px;width:1px;height:18px;background:#99bbe8"></div>
<svg class="r" style="left:777px;top:472px;" width="18" height="15" viewBox="0 0 18 15"><rect x="0" y="0" width="1.5" height="15" fill="#111"/><rect x="2.5" y="0" width="1" height="15" fill="#111"/><rect x="4.5" y="0" width="2" height="15" fill="#111"/><rect x="7.5" y="0" width="1" height="15" fill="#111"/><rect x="9.5" y="0" width="1.5" height="15" fill="#111"/><rect x="12" y="0" width="1" height="15" fill="#111"/><rect x="14" y="0" width="2" height="15" fill="#111"/><rect x="16.5" y="0" width="1.2" height="15" fill="#111"/></svg>
<div class="r" style="left:802.8px;top:471px;width:1px;height:18px;background:#99bbe8"></div>
<svg class="r" style="left:810px;top:472px;" width="19" height="15" viewBox="0 0 19 15"><rect x="0" y="0" width="1.5" height="15" fill="#2e8ee0"/><rect x="2.5" y="0" width="1" height="15" fill="#2e8ee0"/><rect x="4.5" y="0" width="2" height="15" fill="#2e8ee0"/><rect x="7.5" y="0" width="1" height="15" fill="#2e8ee0"/><rect x="9.5" y="0" width="1.5" height="15" fill="#2e8ee0"/><rect x="12" y="0" width="1" height="15" fill="#2e8ee0"/><rect x="14" y="0" width="2" height="15" fill="#2e8ee0"/><rect x="16.5" y="0" width="1.5" height="15" fill="#2e8ee0"/></svg>
<div class="r" style="left:837.1px;top:471px;width:1px;height:18px;background:#99bbe8"></div>
<svg class="r" style="left:844px;top:470px;" width="20" height="20" viewBox="0 0 20 20"><circle cx="10" cy="10" r="9.5" fill="#3f87d6"/><circle cx="10" cy="10" r="8" fill="#5aa0e6"/><text x="10" y="15" font-size="15" font-family="Liberation Sans" font-weight="bold" fill="#eaf3fc" text-anchor="middle">@</text></svg>
<div class="t" style="left:867.3px;top:474.14px;font-size:12px;color:#1a1a1a;letter-spacing:-0.15px;">Follow Up</div>
<div class="r" style="left:937px;top:468px;width:97px;height:24px;background:linear-gradient(#c5d6ea 0%,#b7cce6 45%,#9fc4ee 50%,#9cc3ee 100%);border:1px solid #8aa9cf;border-radius:3px"></div>
<svg class="r" style="left:941px;top:473px;" width="17" height="14" viewBox="0 0 17 14"><rect x="0" y="0" width="17" height="3" fill="#6a1ab0"/><rect x="0" y="5.5" width="17" height="3" fill="#6a1ab0"/><rect x="0" y="11" width="17" height="3" fill="#6a1ab0"/></svg>
<div class="t" style="left:962.8px;top:474.84px;font-size:12px;color:#111;letter-spacing:-0.15px;">Functions</div>
<svg class="r" style="left:1021px;top:479px;" width="8" height="5" viewBox="0 0 8 5"><path d="M0 0 H8 L4 4.5Z" fill="#111"/></svg>
<div class="r" style="left:250px;top:493px;width:1008px;height:29px;background:#d9e6f7"></div>
<div class="r" style="left:250px;top:517px;width:1008px;height:5px;background:#dce8f8;border-top:1px solid #a9c4e6;border-bottom:1px solid #99bbe8"></div>
<div class="r" style="left:253.5px;top:495px;width:108.80000000000001px;height:26px;background:linear-gradient(#ffffff 0%,#e3eefb 40%,#dce8f8 100%);border:1px solid #a9c4e6;border-bottom:none;border-radius:5px 5px 0 0"></div>
<div class="t" style="left:253.5px;top:502.64px;font-size:12px;font-weight:bold;color:#15428b;width:108.80000000000001px;text-align:center;">Basic</div>
<div class="r" style="left:365.5px;top:495px;width:109.10000000000002px;height:23px;background:linear-gradient(#eaf2fc 0%,#dce8f8 45%,#d5e3f6 100%);border:1px solid #a9c4e6;border-bottom:none;border-radius:5px 5px 0 0"></div>
<div class="t" style="left:365.5px;top:502.64px;font-size:12px;font-weight:bold;color:#3e5f90;width:109.10000000000002px;text-align:center;">Address</div>
<div class="r" style="left:478.1px;top:495px;width:109.69999999999993px;height:23px;background:linear-gradient(#eaf2fc 0%,#dce8f8 45%,#d5e3f6 100%);border:1px solid #a9c4e6;border-bottom:none;border-radius:5px 5px 0 0"></div>
<div class="t" style="left:478.1px;top:502.64px;font-size:12px;font-weight:bold;color:#3e5f90;width:109.69999999999993px;text-align:center;">Shipping</div>
<div class="r" style="left:590.4px;top:495px;width:109.20000000000005px;height:23px;background:linear-gradient(#eaf2fc 0%,#dce8f8 45%,#d5e3f6 100%);border:1px solid #a9c4e6;border-bottom:none;border-radius:5px 5px 0 0"></div>
<div class="t" style="left:590.4px;top:502.64px;font-size:12px;font-weight:bold;color:#3e5f90;width:109.20000000000005px;text-align:center;">Docs</div>
<div class="r" style="left:702.6px;top:495px;width:108.89999999999998px;height:23px;background:linear-gradient(#eaf2fc 0%,#dce8f8 45%,#d5e3f6 100%);border:1px solid #a9c4e6;border-bottom:none;border-radius:5px 5px 0 0"></div>
<div class="t" style="left:702.6px;top:502.64px;font-size:12px;font-weight:bold;color:#3e5f90;width:108.89999999999998px;text-align:center;">Custom Fields</div>
<div class="r" style="left:814.4px;top:495px;width:109.30000000000007px;height:23px;background:linear-gradient(#eaf2fc 0%,#dce8f8 45%,#d5e3f6 100%);border:1px solid #a9c4e6;border-bottom:none;border-radius:5px 5px 0 0"></div>
<div class="t" style="left:814.4px;top:502.64px;font-size:12px;font-weight:bold;color:#3e5f90;width:109.30000000000007px;text-align:center;">Scan</div>
<div class="r" style="left:250px;top:522px;width:888px;height:181px;background:#d7ddf6"></div>
<div class="r" style="left:1139px;top:493px;width:119px;height:210px;background:#d7ddf6"></div>
<div class="r" style="left:1138px;top:493px;width:120px;height:1px;background:#a9c1e6"></div>
<div class="r" style="left:1138px;top:493px;width:1px;height:210px;background:#a9c1e6"></div>
<div class="r" style="left:250px;top:703px;width:1008px;height:1px;background:#99bbe8"></div>
<div class="t" style="left:256.7px;top:531.00px;font-size:13px;color:#0f0f0f;">PO Number:</div>
<div class="t" style="left:372.3px;top:531.93px;font-size:12.6px;color:#0f0f0f;letter-spacing:0.1px;">PO160</div>
<div class="t" style="left:256.7px;top:559.00px;font-size:13px;color:#0f0f0f;">Supplier:</div>
<div class="r" style="left:372px;top:555px;width:281px;height:24px;background:linear-gradient(#f4f4f4 0px,#ffffff 4px);border:1px solid #b5b8c8"></div>
<div class="t" style="left:376.7px;top:561.13px;font-size:12.6px;color:#0f0f0f;letter-spacing:0.1px;">DEF001</div>
<div class="t" style="left:256.7px;top:586.50px;font-size:13px;color:#0f0f0f;">Supplier Name:</div>
<div class="t" style="left:372.3px;top:587.43px;font-size:12.6px;color:#0f0f0f;letter-spacing:0.05px;">DEF Company</div>
<div class="t" style="left:256.7px;top:614.00px;font-size:13px;color:#0f0f0f;">Received Date:</div>
<div class="r" style="left:372px;top:610px;width:108px;height:24px;background:linear-gradient(#f4f4f4 0px,#ffffff 4px);border:1px solid #b5b8c8"></div>
<div class="r" style="left:479px;top:610px;width:19px;height:24px;background:linear-gradient(#f2f2f2,#dcdcdc);border:1px solid #b5b8c8"></div>
<svg class="r" style="left:481px;top:614px;" width="16" height="15" viewBox="0 0 16 15"><rect x="1" y="1" width="14" height="13" fill="#dfe6f2" stroke="#6f86ad"/><path d="M1 5h14M5 1v13M9 5v9" stroke="#9aaac6" stroke-width="0.8"/><circle cx="12" cy="4" r="1.8" fill="none" stroke="#b01c2a" stroke-width="1.1"/></svg>
<div class="t" style="left:256.7px;top:641.50px;font-size:13px;color:#0f0f0f;">PO Date:</div>
<div class="t" style="left:372.3px;top:642.43px;font-size:12.6px;color:#0f0f0f;letter-spacing:0.15px;">2026-02-02</div>
<div class="t" style="left:256.7px;top:669.30px;font-size:13px;color:#0f0f0f;">Ship To:</div>
<div class="t" style="left:372.3px;top:670.23px;font-size:12.6px;color:#0f0f0f;letter-spacing:0.1px;">Branch</div>
<div class="t" style="left:520.8px;top:669.20px;font-size:13px;color:#0f0f0f;">Arrived At Site:</div>
<div class="r" style="left:636px;top:668px;width:14px;height:15px;background:linear-gradient(#ffffff,#e2e2e2);border:1px solid #8e8e8e"></div>
<div class="t" style="left:669.7px;top:530.80px;font-size:13px;color:#0f0f0f;">PO Status:</div>
<div class="t" style="left:784.8px;top:532.13px;font-size:12.6px;color:#0f0f0f;letter-spacing:0.1px;">Ordered</div>
<div class="t" style="left:669.7px;top:558.70px;font-size:13px;color:#0f0f0f;">Description:</div>
<div class="r" style="left:785px;top:556px;width:280px;height:23px;background:linear-gradient(#f4f4f4 0px,#ffffff 4px);border:1px solid #b5b8c8"></div>
<div class="t" style="left:789px;top:562.33px;font-size:12.6px;color:#0f0f0f;letter-spacing:0.05px;">Serial Number Import</div>
<div class="t" style="left:669.7px;top:586.00px;font-size:13px;color:#0f0f0f;">Reference:</div>
<div class="r" style="left:785px;top:583px;width:280px;height:23px;background:linear-gradient(#f4f4f4 0px,#ffffff 4px);border:1px solid #b5b8c8"></div>
<div class="t" style="left:669.7px;top:613.80px;font-size:13px;color:#0f0f0f;">Currency:</div>
<div class="t" style="left:784.8px;top:615.43px;font-size:12.6px;color:#0f0f0f;letter-spacing:0.05px;">NZ Dollar</div>
<div class="t" style="left:856px;top:613.80px;font-size:13px;color:#0f0f0f;">Exchange Rate:</div>
<div class="r" style="left:972px;top:610px;width:93px;height:24px;background:linear-gradient(#f4f4f4 0px,#ffffff 4px);border:1px solid #b5b8c8"></div>
<div class="t" style="left:972px;top:616.83px;font-size:12.6px;color:#0f0f0f;width:93px;text-align:center;">1</div>
<div class="t" style="left:669.7px;top:641.00px;font-size:13px;color:#0f0f0f;">Long Description:</div>
<div class="r" style="left:785px;top:638px;width:280px;height:42px;background:linear-gradient(#f4f4f4 0px,#ffffff 4px);border:1px solid #b5b8c8"></div>
<div class="r" style="left:1145px;top:494px;width:109px;height:24.5px;background:linear-gradient(#ffffff 0%,#f7f7f7 48%,#e6e6e6 50%,#e0e0e0 100%);border:1px solid #d2d9e4;border-radius:3px 0 0 3px;border-right:none"></div>
<div class="t" style="left:1160px;top:500.25px;font-size:12.4px;color:#111;letter-spacing:-0.1px;width:98px;text-align:center;">Save</div>
<svg class="r" style="left:1146px;top:495px;" width="19" height="20" viewBox="0 0 19 20"><path d="M1 1 H15 L18 4 V19 H1Z" fill="#1e6fd0"/><rect x="4" y="1" width="9" height="6" fill="#fff"/><rect x="10" y="2" width="2" height="4" fill="#1e6fd0"/><rect x="4" y="11" width="11" height="8" fill="#fff"/></svg>
<div class="r" style="left:1145px;top:524px;width:109px;height:24.600000000000023px;background:linear-gradient(#ffffff 0%,#f7f7f7 48%,#e6e6e6 50%,#e0e0e0 100%);border:1px solid #d2d9e4;border-radius:3px 0 0 3px;border-right:none"></div>
<div class="t" style="left:1160px;top:530.30px;font-size:12.4px;color:#111;letter-spacing:-0.1px;width:98px;text-align:center;">Close</div>
<svg class="r" style="left:1146px;top:526px;" width="19" height="19" viewBox="0 0 19 19"><path d="M6 1 H13 L18 6 V13 L13 18 H6 L1 13 V6Z" fill="#e2473a" stroke="#c03028" stroke-width="0.8"/><path d="M6 6 L13 13 M13 6 L6 13" stroke="#fff" stroke-width="2.4"/></svg>
<div class="r" style="left:1145px;top:553.5px;width:109px;height:25.100000000000023px;background:linear-gradient(#ffffff 0%,#f7f7f7 48%,#e6e6e6 50%,#e0e0e0 100%);border:1px solid #d2d9e4;border-radius:3px 0 0 3px;border-right:none"></div>
<div class="t" style="left:1160px;top:560.05px;font-size:12.4px;color:#a0a4ab;letter-spacing:-0.1px;width:98px;text-align:center;">View Stock Requ</div>
<div class="r" style="left:1145px;top:553.5px;width:109px;height:25px;background:linear-gradient(#eeeeee 0%,#e9e9e9 48%,#dcdcdc 50%,#d8d8d8 100%);border:1px solid #d2d9e4;border-right:none;border-radius:3px 0 0 3px"></div>
<div class="t" style="left:1169px;top:560.00px;font-size:12.4px;color:#a3a7ae;letter-spacing:-0.1px;width:85px;overflow:hidden;">View Stock Requ</div>
<svg class="r" style="left:1147px;top:560px;" width="20" height="11" viewBox="0 0 20 11"><path d="M1 5.5 Q10 -2 19 5.5 Q10 12 1 5.5Z" fill="none" stroke="#aab3c2" stroke-width="1.3"/><circle cx="10" cy="5.5" r="2.5" fill="#9fb6d6"/></svg>
<div class="r" style="left:1145px;top:583px;width:109px;height:24.600000000000023px;background:linear-gradient(#ffffff 0%,#f7f7f7 48%,#e6e6e6 50%,#e0e0e0 100%);border:1px solid #d2d9e4;border-radius:3px 0 0 3px;border-right:none"></div>
<div class="t" style="left:1160px;top:589.30px;font-size:12.4px;color:#111;letter-spacing:-0.1px;width:98px;text-align:center;">Receive Stock</div>
<svg class="r" style="left:1146px;top:584px;" width="19" height="20" viewBox="0 0 19 20"><path d="M1 9 h4 v10 h-4z M6 9 L10 2 Q13 1 12.5 4.5 L11.5 8 H17 Q19 9 18 11.5 L16 17.5 Q15 19 13 19 H6z" fill="#39b024"/><path d="M6 9 L10 2 Q13 1 12.5 4.5 L11.5 8 H17" fill="none" stroke="#6fd84a" stroke-width="1"/></svg>
<div class="r" style="left:1145px;top:612.5px;width:109px;height:24.600000000000023px;background:linear-gradient(#ffffff 0%,#f7f7f7 48%,#e6e6e6 50%,#e0e0e0 100%);border:1px solid #d2d9e4;border-radius:3px 0 0 3px;border-right:none"></div>
<div class="t" style="left:1160px;top:618.80px;font-size:12.4px;color:#111;letter-spacing:-0.1px;width:98px;text-align:center;">Receive All</div>
<svg class="r" style="left:1146px;top:614px;" width="19" height="20" viewBox="0 0 19 20"><path d="M1 9 h4 v10 h-4z M6 9 L10 2 Q13 1 12.5 4.5 L11.5 8 H17 Q19 9 18 11.5 L16 17.5 Q15 19 13 19 H6z" fill="#8a2a98"/></svg>
<div class="r" style="left:1145px;top:642.6px;width:109px;height:23px;background:linear-gradient(#ffffff 0%,#f7f7f7 48%,#e6e6e6 50%,#e0e0e0 100%);border:1px solid #d2d9e4;border-right:none;border-radius:3px 0 0 3px"></div>
<div class="t" style="left:1198px;top:648.10px;font-size:12.4px;font-weight:bold;color:#111;">P</div>
<div class="t" style="left:1206.3px;top:648.10px;font-size:12.4px;color:#111;">rint</div>
<svg class="r" style="left:1146px;top:644px;" width="20" height="19" viewBox="0 0 20 19"><rect x="4.5" y="1" width="11" height="6" fill="#fff" stroke="#5a6a80" stroke-width="1.1"/><rect x="1" y="6.5" width="18" height="8" rx="2" fill="#d9dde3" stroke="#404a58" stroke-width="1.1"/><rect x="4.5" y="12" width="11" height="6" fill="#fff" stroke="#404a58" stroke-width="1.1"/></svg>
<div class="r" style="left:1145px;top:669.6px;width:109px;height:24.600000000000023px;background:linear-gradient(#ffffff 0%,#f7f7f7 48%,#e6e6e6 50%,#e0e0e0 100%);border:1px solid #d2d9e4;border-radius:3px 0 0 3px;border-right:none"></div>
<div class="t" style="left:1160px;top:675.90px;font-size:12.4px;color:#111;letter-spacing:-0.1px;width:98px;text-align:center;">Complete</div>
<svg class="r" style="left:1147px;top:672px;" width="18" height="18" viewBox="0 0 18 18"><path d="M1 1 L9 9 L1 17Z" fill="#6a22c8"/><path d="M8 1 L17 9 L8 17Z" fill="#a030f0"/></svg>
<div class="r" style="left:938px;top:494px;width:160px;height:64px;background:#f0f0f0;border:1px solid #c9c9c9;box-shadow:1px 1px 2px rgba(0,0,0,0.15)"></div>
<div class="r" style="left:970px;top:495px;width:1px;height:62px;background:#e0e0e0"></div>
<div class="r" style="left:971px;top:495px;width:1px;height:62px;background:#ffffff"></div>
<svg class="r" style="left:946px;top:502px;" width="14" height="20" viewBox="0 0 14 20"><rect x="3" y="1" width="8" height="14" rx="4" fill="#fff" stroke="#111" stroke-width="1.5"/><circle cx="7" cy="15" r="5" fill="#fff" stroke="#111" stroke-width="1.5"/><rect x="5.5" y="6" width="3" height="9" fill="#2a8ae6"/><circle cx="7" cy="15" r="3" fill="#2a8ae6"/></svg>
<div class="t" style="left:977.2px;top:506.97px;font-size:12.2px;color:#111;letter-spacing:0px;">Temperature Update</div>
<svg class="r" style="left:944px;top:534px;" width="20" height="14" viewBox="0 0 20 14"><path d="M4 11 Q0 11 1 7.5 Q2 5 5 5.5 Q6 1 10.5 1 Q15 1 16 5 Q19.5 5.5 19 9 Q18.5 11 16 11" fill="none" stroke="#222" stroke-width="1.4"/><path d="M7 13 V7.5 M4.5 10 L7 7.5 L9.5 10" fill="none" stroke="#1a4ad8" stroke-width="2"/><path d="M13 7 V12.5 M10.5 10 L13 12.5 L15.5 10" fill="none" stroke="#f04050" stroke-width="2"/></svg>
<div class="t" style="left:977.2px;top:537.37px;font-size:12.2px;color:#111;letter-spacing:0.05px;">Serial Import / Export</div>
<div class="r" style="left:937px;top:528px;width:163px;height:33px;border:3px solid #e00010"></div>
<div class="r" style="left:931px;top:461px;width:110px;height:39px;border:3px solid #e00010"></div>
<div class="r" style="left:250px;top:704px;width:1008px;height:30px;background:linear-gradient(#dde8f6,#d6e3f4)"></div>
<div class="r" style="left:250px;top:733px;width:1008px;height:1px;background:#99bbe8"></div>
<div class="t" style="left:255.6px;top:713.54px;font-size:12px;color:#111;letter-spacing:0px;">Items</div>
<div class="r" style="left:1238px;top:712px;width:15px;height:15px;background:linear-gradient(#f4f8fd,#d7e4f5);border:1px solid #9ab7dd;border-radius:3px"></div>
<div class="r" style="left:1241.5px;top:719px;width:8px;height:2px;background:#5b7fb0"></div>
<div class="r" style="left:250px;top:734px;width:1008px;height:33px;background:linear-gradient(#dfe8f5,#d3e0f1)"></div>
<svg class="r" style="left:258px;top:745px;" width="11" height="13" viewBox="0 0 11 13"><rect x="0" y="0" width="2" height="13" fill="#b9bec8"/><path d="M10 0 L3 6.5 L10 13Z" fill="#b9bec8"/></svg>
<svg class="r" style="left:285px;top:745px;" width="8" height="13" viewBox="0 0 8 13"><path d="M7 0 L1 6.5 L7 13Z" fill="#b9bec8"/></svg>
<div class="r" style="left:308.5px;top:743px;width:1px;height:16px;background:#99bbe8"></div>
<div class="t" style="left:318.2px;top:747.00px;font-size:12.4px;color:#333a45;letter-spacing:-0.1px;">Page</div>
<div class="r" style="left:353px;top:741px;width:33px;height:22px;background:#fff;border:1px solid #b5b8c8"></div>
<div class="t" style="left:357.5px;top:746.50px;font-size:13px;color:#111;">1</div>
<div class="t" style="left:395px;top:747.00px;font-size:12.4px;color:#333a45;letter-spacing:-0.1px;">of 1</div>
<div class="r" style="left:425.5px;top:743px;width:1px;height:16px;background:#99bbe8"></div>
<svg class="r" style="left:437px;top:745px;" width="8" height="13" viewBox="0 0 8 13"><path d="M1 0 L7 6.5 L1 13Z" fill="#b9bec8"/></svg>
<svg class="r" style="left:462px;top:745px;" width="11" height="13" viewBox="0 0 11 13"><path d="M1 0 L8 6.5 L1 13Z" fill="#b9bec8"/><rect x="9" y="0" width="2" height="13" fill="#b9bec8"/></svg>
<div class="r" style="left:486px;top:743px;width:1px;height:16px;background:#99bbe8"></div>
<svg class="r" style="left:494px;top:742px;" width="19" height="18" viewBox="0 0 19 18"><path d="M3 8.5 A6.5 6.5 0 0 1 15 5 L17 3 L17 9.5 L10.5 9.5 L12.5 7.5 A4.5 4.5 0 0 0 5.5 8.5Z" fill="#2f7fd8"/><path d="M16 9.5 A6.5 6.5 0 0 1 4 13 L2 15 L2 8.5 L8.5 8.5 L6.5 10.5 A4.5 4.5 0 0 0 13.5 9.5Z" fill="#56a8f0"/></svg>
<div class="r" style="left:519px;top:743px;width:1px;height:16px;background:#99bbe8"></div>
<svg class="r" style="left:529px;top:742px;" width="16" height="19" viewBox="0 0 16 19"><path d="M1 1 H10 L15 6 V18 H1Z" fill="#fff" stroke="#1a1a1a" stroke-width="1.4"/><path d="M10 1 V6 H15" fill="none" stroke="#1a1a1a" stroke-width="1.2"/><path d="M4 9h8M4 12h8M4 15h8" stroke="#999" stroke-width="0.8"/></svg>
<div class="t" style="left:549.4px;top:747.00px;font-size:12.4px;color:#1a1a1a;letter-spacing:-0.1px;">Paging</div>
<div class="r" style="left:599.4px;top:743px;width:1px;height:16px;background:#99bbe8"></div>
<svg class="r" style="left:606px;top:742px;" width="19" height="19" viewBox="0 0 19 19"><path d="M1 9 h4 v10 h-4z M6 9 L10 2 Q13 1 12.5 4.5 L11.5 8 H17 Q19 9 18 11.5 L16 17.5 Q15 19 13 19 H6z" fill="#39b024"/></svg>
<div class="r" style="left:633.6px;top:743px;width:1px;height:16px;background:#99bbe8"></div>
<svg class="r" style="left:640px;top:742px;" width="19" height="19" viewBox="0 0 19 19"><path d="M1 9 h4 v10 h-4z M6 9 L10 2 Q13 1 12.5 4.5 L11.5 8 H17 Q19 9 18 11.5 L16 17.5 Q15 19 13 19 H6z" fill="#8a2a98"/></svg>
<div class="r" style="left:667.6px;top:743px;width:1px;height:16px;background:#99bbe8"></div>
<svg class="r" style="left:676px;top:743px;" width="17" height="17" viewBox="0 0 17 17"><path d="M1 5.5 V1 H5.5 M11.5 1 H16 V5.5 M16 11.5 V16 H11.5 M5.5 16 H1 V11.5" fill="none" stroke="#1a1a1a" stroke-width="2"/><rect x="4" y="7.5" width="9" height="2" fill="#e02020"/></svg>
<div class="t" style="left:697.5px;top:747.00px;font-size:12.4px;color:#1a1a1a;letter-spacing:-0.1px;">Confirm Scan</div>
<div class="r" style="left:781.5px;top:743px;width:1px;height:16px;background:#99bbe8"></div>
<svg class="r" style="left:790px;top:743px;" width="18" height="18" viewBox="0 0 18 18"><path d="M10 1 H17 V8 L8 17 L1 10Z" fill="#fff" stroke="#1a1a1a" stroke-width="2"/><circle cx="13.5" cy="4.5" r="1.5" fill="#1a1a1a"/></svg>
<div class="r" style="left:815.4px;top:743px;width:1px;height:16px;background:#99bbe8"></div>
<svg class="r" style="left:824px;top:743px;" width="19" height="18" viewBox="0 0 19 18"><path d="M10 1 H18 V8 L9 17 L2 10Z" fill="#fff" stroke="#2f86e0" stroke-width="2.4"/><circle cx="14" cy="4.5" r="1.5" fill="#2f86e0"/></svg>
<div class="r" style="left:850.3px;top:743px;width:1px;height:16px;background:#99bbe8"></div>
<svg class="r" style="left:857px;top:742px;" width="19" height="20" viewBox="0 0 19 20"><path d="M1 1 H9 L13 5 V18 H1Z" fill="#fff" stroke="#1a1a1a" stroke-width="1.4"/><circle cx="13" cy="14.5" r="5" fill="#3ca84a"/><path d="M13 11.5 V17.5 M10 14.5 H16" stroke="#fff" stroke-width="1.8"/></svg>
<div class="t" style="left:879.4px;top:747.00px;font-size:12.4px;color:#1a1a1a;letter-spacing:-0.1px;">Add</div>
<div class="r" style="left:913.9px;top:743px;width:1px;height:16px;background:#99bbe8"></div>
<svg class="r" style="left:926px;top:742px;" width="19" height="20" viewBox="0 0 19 20"><path d="M1 1 H9 L13 5 V18 H1Z" fill="#fff" stroke="#1a1a1a" stroke-width="1.4"/><circle cx="13" cy="14.5" r="5" fill="#e84850"/><path d="M11 12.5 L15 16.5 M15 12.5 L11 16.5" stroke="#fff" stroke-width="1.6"/></svg>
<div class="t" style="left:949px;top:747.00px;font-size:12.4px;color:#1a1a1a;letter-spacing:-0.1px;">Delete</div>
<div class="r" style="left:993.8px;top:743px;width:1px;height:16px;background:#99bbe8"></div>
<div class="r" style="left:1008px;top:743px;width:17px;height:17px;background:#e8929a;border-radius:3px"></div>
<svg class="r" style="left:1010px;top:746px;" width="13" height="11" viewBox="0 0 13 11"><path d="M5 2 Q2 2 2 5 Q2 8 5 8 H7 M6 3 H8 Q11 3 11 6 Q11 9 8 9 H6" fill="none" stroke="#fff" stroke-width="1.6"/></svg>
<div class="t" style="left:1030px;top:747.00px;font-size:12.4px;color:#9a9ea6;letter-spacing:-0.1px;">Cost Change</div>
<svg class="r" style="left:1109px;top:744px;" width="20" height="16" viewBox="0 0 20 16"><path d="M1 8 Q10 -1 19 8 Q10 17 1 8Z" fill="none" stroke="#1a1a1a" stroke-width="1.8"/><circle cx="10" cy="8" r="3" fill="none" stroke="#1a1a1a" stroke-width="1.6"/><path d="M3 1 L17 15" stroke="#1a1a1a" stroke-width="1.8"/></svg>
<div class="t" style="left:1132px;top:747.00px;font-size:12.4px;color:#1a1a1a;letter-spacing:-0.1px;">Show Lines</div>
<div class="t" style="left:1208.8px;top:747.00px;font-size:12.4px;color:#1a1a1a;letter-spacing:-0.1px;">Displaying</div>
<div class="r" style="left:250px;top:767px;width:1008px;height:127px;background:#fff"></div>
<div class="r" style="left:250px;top:767px;width:1008px;height:25px;background:linear-gradient(#f9f9f9,#e3e4e6)"></div>
<div class="r" style="left:250px;top:791px;width:1008px;height:1px;background:#d0d0d0"></div>
<div class="r" style="left:293.8px;top:768px;width:1px;height:23px;background:#d0d0d0"></div>
<div class="r" style="left:337.8px;top:768px;width:1px;height:23px;background:#d0d0d0"></div>
<div class="r" style="left:403.8px;top:768px;width:1px;height:23px;background:#d0d0d0"></div>
<div class="r" style="left:513.8px;top:768px;width:1px;height:23px;background:#d0d0d0"></div>
<div class="r" style="left:623.5px;top:768px;width:1px;height:23px;background:#d0d0d0"></div>
<div class="r" style="left:733.6px;top:768px;width:1px;height:23px;background:#d0d0d0"></div>
<div class="r" style="left:843.5px;top:768px;width:1px;height:23px;background:#d0d0d0"></div>
<div class="r" style="left:931.5px;top:768px;width:1px;height:23px;background:#d0d0d0"></div>
<div class="r" style="left:986.7px;top:768px;width:1px;height:23px;background:#d0d0d0"></div>
<div class="r" style="left:1096.9px;top:768px;width:1px;height:23px;background:#d0d0d0"></div>
<div class="r" style="left:1207px;top:768px;width:1px;height:23px;background:#d0d0d0"></div>
<div class="t" style="left:250px;top:772.44px;font-size:12px;color:#111;width:43.80000000000001px;text-align:center;">#</div>
<div class="t" style="left:293.8px;top:772.44px;font-size:12px;color:#111;width:44.0px;text-align:center;">Image</div>
<div class="t" style="left:344.8px;top:772.44px;font-size:12px;color:#111;">Seq No</div>
<div class="t" style="left:410.8px;top:772.44px;font-size:12px;color:#111;">Stock Type</div>
<div class="t" style="left:520.8px;top:772.44px;font-size:12px;color:#111;">Code</div>
<div class="t" style="left:630.5px;top:772.44px;font-size:12px;color:#111;">Supplier Item Code</div>
<div class="t" style="left:740.6px;top:772.44px;font-size:12px;color:#111;">Description</div>
<div class="t" style="left:850.5px;top:772.44px;font-size:12px;color:#111;">Delivery Date</div>
<div class="t" style="left:938.5px;top:772.44px;font-size:12px;color:#111;">Day</div>
<div class="t" style="left:986.7px;top:772.44px;font-size:12px;color:#111;width:110.20000000000005px;text-align:center;">Order Qty</div>
<div class="t" style="left:1096.9px;top:772.44px;font-size:12px;color:#111;width:110.09999999999991px;text-align:center;">Received Qty</div>
<div class="t" style="left:1227px;top:772.10px;font-size:12.4px;color:#111;letter-spacing:-0.15px;">MC U</div>
<div class="r" style="left:250px;top:792px;width:43.8px;height:26px;background:linear-gradient(90deg,#ffffff,#e9e9e9)"></div>
<div class="r" style="left:293.8px;top:792px;width:964.2px;height:26px;background:#ffffff"></div>
<div class="r" style="left:250px;top:817px;width:1008px;height:1px;background:#ededed"></div>
<div class="r" style="left:293.8px;top:792px;width:1px;height:26px;background:#dadada"></div>
<div class="r" style="left:337.8px;top:792px;width:1px;height:26px;background:#dadada"></div>
<div class="r" style="left:403.8px;top:792px;width:1px;height:26px;background:#dadada"></div>
<div class="r" style="left:513.8px;top:792px;width:1px;height:26px;background:#dadada"></div>
<div class="r" style="left:623.5px;top:792px;width:1px;height:26px;background:#dadada"></div>
<div class="r" style="left:733.6px;top:792px;width:1px;height:26px;background:#dadada"></div>
<div class="r" style="left:843.5px;top:792px;width:1px;height:26px;background:#dadada"></div>
<div class="r" style="left:931.5px;top:792px;width:1px;height:26px;background:#dadada"></div>
<div class="r" style="left:986.7px;top:792px;width:1px;height:26px;background:#dadada"></div>
<div class="r" style="left:1096.9px;top:792px;width:1px;height:26px;background:#dadada"></div>
<div class="r" style="left:1207px;top:792px;width:1px;height:26px;background:#dadada"></div>
<div class="t" style="left:250px;top:797.30px;font-size:12.4px;color:#111;width:39.5px;text-align:right;">1</div>
<svg class="r" style="left:308px;top:798px;" width="17" height="13" viewBox="0 0 17 13"><rect x="0.7" y="0.7" width="15.6" height="11.6" fill="#dfe9f6" stroke="#5a6a80" stroke-width="1.2"/><path d="M2.5 10.5 L6.5 5 L9.5 8.5 L11 7 L14.5 10.5Z" fill="#3a78c8"/><circle cx="11.5" cy="4" r="1.2" fill="#3a78c8"/></svg>
<div class="t" style="left:346.3px;top:797.64px;font-size:12px;color:#111;">1.00</div>
<div class="t" style="left:411.3px;top:797.64px;font-size:12px;color:#111;">Stock</div>
<div class="t" style="left:521.3px;top:797.64px;font-size:12px;color:#111;">COM/LAPTOP</div>
<div class="t" style="left:741.1px;top:797.64px;font-size:12px;color:#111;">Laptop HP 350</div>
<div class="t" style="left:851.0px;top:797.64px;font-size:12px;color:#111;">2026-02-02</div>
<div class="t" style="left:939.0px;top:797.64px;font-size:12px;color:#111;">Mon</div>
<div class="t" style="left:986.7px;top:797.64px;font-size:12px;color:#111;width:110.20000000000005px;text-align:center;">4</div>
<div class="r" style="left:250px;top:818px;width:43.8px;height:26px;background:linear-gradient(90deg,#ffffff,#e9e9e9)"></div>
<div class="r" style="left:293.8px;top:818px;width:964.2px;height:26px;background:#d1d8e6"></div>
<div class="r" style="left:250px;top:843px;width:1008px;height:1px;background:#ededed"></div>
<div class="r" style="left:293.8px;top:818px;width:1px;height:26px;background:#dadada"></div>
<div class="r" style="left:337.8px;top:818px;width:1px;height:26px;background:#dadada"></div>
<div class="r" style="left:403.8px;top:818px;width:1px;height:26px;background:#dadada"></div>
<div class="r" style="left:513.8px;top:818px;width:1px;height:26px;background:#dadada"></div>
<div class="r" style="left:623.5px;top:818px;width:1px;height:26px;background:#dadada"></div>
<div class="r" style="left:733.6px;top:818px;width:1px;height:26px;background:#dadada"></div>
<div class="r" style="left:843.5px;top:818px;width:1px;height:26px;background:#dadada"></div>
<div class="r" style="left:931.5px;top:818px;width:1px;height:26px;background:#dadada"></div>
<div class="r" style="left:986.7px;top:818px;width:1px;height:26px;background:#dadada"></div>
<div class="r" style="left:1096.9px;top:818px;width:1px;height:26px;background:#dadada"></div>
<div class="r" style="left:1207px;top:818px;width:1px;height:26px;background:#dadada"></div>
<div class="t" style="left:250px;top:823.30px;font-size:12.4px;color:#111;width:39.5px;text-align:right;">2</div>
<svg class="r" style="left:308px;top:824px;" width="17" height="13" viewBox="0 0 17 13"><rect x="0.7" y="0.7" width="15.6" height="11.6" fill="#dfe9f6" stroke="#5a6a80" stroke-width="1.2"/><path d="M2.5 10.5 L6.5 5 L9.5 8.5 L11 7 L14.5 10.5Z" fill="#3a78c8"/><circle cx="11.5" cy="4" r="1.2" fill="#3a78c8"/></svg>
<div class="t" style="left:346.3px;top:823.64px;font-size:12px;color:#111;">2.00</div>
<div class="t" style="left:411.3px;top:823.64px;font-size:12px;color:#111;">Stock</div>
<div class="t" style="left:521.3px;top:823.64px;font-size:12px;color:#111;">CPU/1151/I7/7...</div>
<div class="t" style="left:741.1px;top:823.64px;font-size:12px;color:#111;">Intel CPU i7 77...</div>
<div class="t" style="left:851.0px;top:823.64px;font-size:12px;color:#111;">2026-02-02</div>
<div class="t" style="left:939.0px;top:823.64px;font-size:12px;color:#111;">Mon</div>
<div class="t" style="left:986.7px;top:823.64px;font-size:12px;color:#111;width:110.20000000000005px;text-align:center;">2</div>
<div class="t" style="left:1249px;top:796.64px;font-size:12px;color:#e00000;">1,</div>
<div class="r" style="left:1258px;top:436px;width:6px;height:458px;background:#62a3dc"></div>
<div class="r" style="left:1257px;top:436px;width:1px;height:458px;background:#99bbe8"></div>
<div class="r" style="left:1264px;top:392px;width:32px;height:502px;background:linear-gradient(90deg,#8e8e8e,#a3a3a3 10px)"></div>
</body></html>
